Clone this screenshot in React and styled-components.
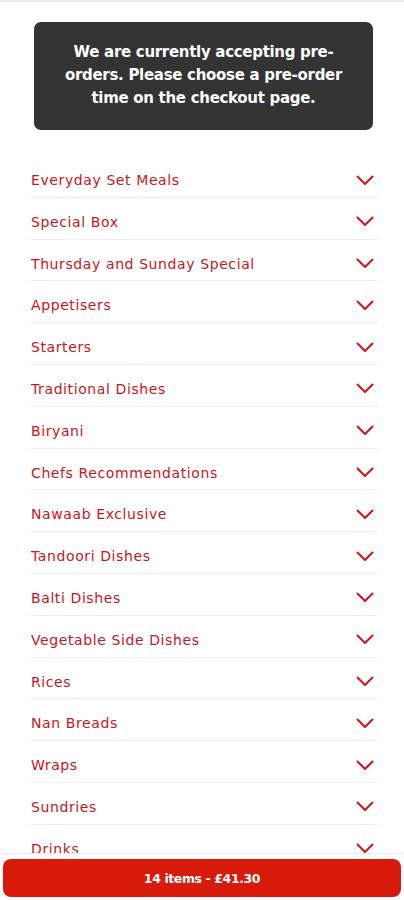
import React from "react";
import styled, { createGlobalStyle } from "styled-components";

const Global = createGlobalStyle`
  html, body { margin: 0; padding: 0; background: #fff; }
  body { font-family: "DejaVu Sans", "Noto Sans", sans-serif; -webkit-font-smoothing: antialiased; }
`;

const Page = styled.div`
  border-top: 2px solid #ececec;
  padding: 20px 0 60px;
`;

const Notice = styled.div`
  margin: 0 31px 0 34px;
  background: #333333;
  border-radius: 7px;
  color: #fff;
  font-weight: 700;
  font-size: 15px;
  letter-spacing: -0.3px;
  line-height: 23px;
  text-align: center;
  padding: 19px 12px 20px;
`;

const List = styled.ul`
  list-style: none;
  margin: 26px 26px 0 31px;
  padding: 0;
`;

const Row = styled.li`
  display: flex;
  align-items: center;
  justify-content: space-between;
  padding: 14px 4px 6.8px 0;
  line-height: 20px;
  border-bottom: 1px solid #eeeeee;
  color: #c8161d;
  font-size: 14px;
  letter-spacing: 0.6px;
`;

const Chevron = () => (
  <svg width="18" height="11" viewBox="0 0 18 11" fill="none">
    <path d="M1.5 1.5 L9 9 L16.5 1.5" stroke="#d0141c" strokeWidth="2" strokeLinecap="round" strokeLinejoin="round" />
  </svg>
);

const Footer = styled.div`
  position: fixed;
  left: 0;
  right: 0;
  bottom: 0;
  background: #fff;
  border-top: 1px solid #eeeeee;
  padding: 5px 3px 3px 3px;
`;

const CartButton = styled.button`
  display: block;
  width: 100%;
  height: 38px;
  border: none;
  border-radius: 8px;
  background: #d71a0a;
  color: #fff;
  font-family: inherit;
  font-weight: 700;
  font-size: 12.5px;
  letter-spacing: -0.4px;
`;

const categories = [
  "Everyday Set Meals",
  "Special Box",
  "Thursday and Sunday Special",
  "Appetisers",
  "Starters",
  "Traditional Dishes",
  "Biryani",
  "Chefs Recommendations",
  "Nawaab Exclusive",
  "Tandoori Dishes",
  "Balti Dishes",
  "Vegetable Side Dishes",
  "Rices",
  "Nan Breads",
  "Wraps",
  "Sundries",
  "Drinks",
];

export default function App() {
  return (
    <>
      <Global />
      <Page>
        <Notice>
          We are currently accepting pre-
          <br />
          orders. Please choose a pre-order
          <br />
          time on the checkout page.
        </Notice>
        <List>
          {categories.map((c) => (
            <Row key={c}>
              <span>{c}</span>
              <Chevron />
            </Row>
          ))}
        </List>
      </Page>
      <Footer>
        <CartButton>14 items - £41.30</CartButton>
      </Footer>
    </>
  );
}
